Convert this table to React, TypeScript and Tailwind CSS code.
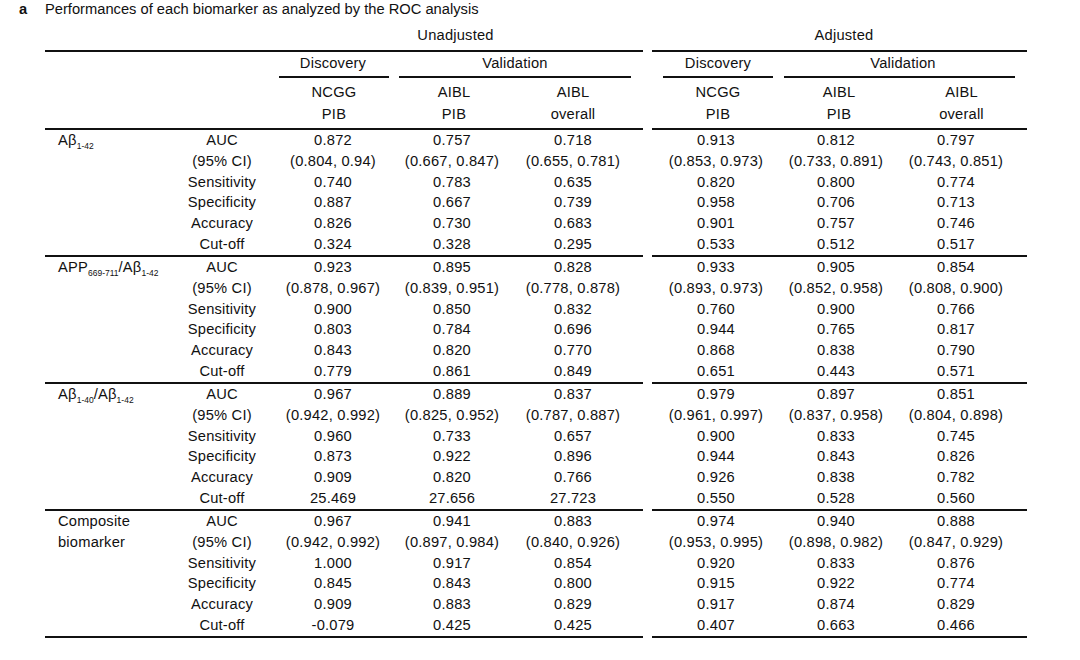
import React from "react";

type Row = [string, string, string, string, string, string, string];

const Sub = ({ children }: { children: React.ReactNode }) => (
  <span className="text-[8.5px] leading-none align-[-4px] tracking-normal">{children}</span>
);

const groups: { label: React.ReactNode[]; rows: Row[] }[] = [
  {
    label: [
      <>
        Aβ<Sub>1-42</Sub>
      </>,
    ],
    rows: [
      ["AUC", "0.872", "0.757", "0.718", "0.913", "0.812", "0.797"],
      ["(95% CI)", "(0.804, 0.94)", "(0.667, 0.847)", "(0.655, 0.781)", "(0.853, 0.973)", "(0.733, 0.891)", "(0.743, 0.851)"],
      ["Sensitivity", "0.740", "0.783", "0.635", "0.820", "0.800", "0.774"],
      ["Specificity", "0.887", "0.667", "0.739", "0.958", "0.706", "0.713"],
      ["Accuracy", "0.826", "0.730", "0.683", "0.901", "0.757", "0.746"],
      ["Cut-off", "0.324", "0.328", "0.295", "0.533", "0.512", "0.517"],
    ],
  },
  {
    label: [
      <>
        APP<Sub>669-711</Sub>/Aβ<Sub>1-42</Sub>
      </>,
    ],
    rows: [
      ["AUC", "0.923", "0.895", "0.828", "0.933", "0.905", "0.854"],
      ["(95% CI)", "(0.878, 0.967)", "(0.839, 0.951)", "(0.778, 0.878)", "(0.893, 0.973)", "(0.852, 0.958)", "(0.808, 0.900)"],
      ["Sensitivity", "0.900", "0.850", "0.832", "0.760", "0.900", "0.766"],
      ["Specificity", "0.803", "0.784", "0.696", "0.944", "0.765", "0.817"],
      ["Accuracy", "0.843", "0.820", "0.770", "0.868", "0.838", "0.790"],
      ["Cut-off", "0.779", "0.861", "0.849", "0.651", "0.443", "0.571"],
    ],
  },
  {
    label: [
      <>
        Aβ<Sub>1-40</Sub>/Aβ<Sub>1-42</Sub>
      </>,
    ],
    rows: [
      ["AUC", "0.967", "0.889", "0.837", "0.979", "0.897", "0.851"],
      ["(95% CI)", "(0.942, 0.992)", "(0.825, 0.952)", "(0.787, 0.887)", "(0.961, 0.997)", "(0.837, 0.958)", "(0.804, 0.898)"],
      ["Sensitivity", "0.960", "0.733", "0.657", "0.900", "0.833", "0.745"],
      ["Specificity", "0.873", "0.922", "0.896", "0.944", "0.843", "0.826"],
      ["Accuracy", "0.909", "0.820", "0.766", "0.926", "0.838", "0.782"],
      ["Cut-off", "25.469", "27.656", "27.723", "0.550", "0.528", "0.560"],
    ],
  },
  {
    label: [<>Composite</>, <>biomarker</>],
    rows: [
      ["AUC", "0.967", "0.941", "0.883", "0.974", "0.940", "0.888"],
      ["(95% CI)", "(0.942, 0.992)", "(0.897, 0.984)", "(0.840, 0.926)", "(0.953, 0.995)", "(0.898, 0.982)", "(0.847, 0.929)"],
      ["Sensitivity", "1.000", "0.917", "0.854", "0.920", "0.833", "0.876"],
      ["Specificity", "0.845", "0.843", "0.800", "0.915", "0.922", "0.774"],
      ["Accuracy", "0.909", "0.883", "0.829", "0.917", "0.874", "0.829"],
      ["Cut-off", "-0.079", "0.425", "0.425", "0.407", "0.663", "0.466"],
    ],
  },
];

const GRID = "grid grid-cols-[125px_104px_118px_120px_131px_9px_126px_118px_131px]";

const Rule = () => (
  <div className="flex gap-[9px]">
    <div className="w-[598px] h-[2px] bg-[#111]" />
    <div className="w-[375px] h-[2px] bg-[#111]" />
  </div>
);

const dataPad = ["", "", "pr-[9px]", "", "pl-[2px]", "pr-[2px]", "pr-[11px]"];

export default function App() {
  return (
    <div className="w-[1080px] h-[660px] bg-white text-[#111] font-['Liberation_Sans',Arial,sans-serif] text-[14.7px] overflow-hidden">
      {/* Title */}
      <div className="flex h-[18px] leading-[18px] pl-[19px]">
        <span className="w-[26px] font-bold">a</span>
        <span>Performances of each biomarker as analyzed by the ROC analysis</span>
      </div>

      <div className="ml-[45px] mt-[7px] tracking-[0.2px]">
        {/* Unadjusted / Adjusted */}
        <div className={`${GRID} h-[25px] leading-[21px]`}>
          <div className="col-span-2" />
          <div className="col-span-3 text-center pr-[6px]">Unadjusted</div>
          <div />
          <div className="col-span-3 text-center pl-[9px]">Adjusted</div>
        </div>
        <Rule />

        {/* Discovery / Validation */}
        <div className={`${GRID} leading-[21px]`}>
          <div className="col-span-2" />
          <div>
            <div className="h-[24px] pt-[1px] text-center">Discovery</div>
            <div className="h-[2px] bg-[#111] ml-[5px] mr-[3px]" />
          </div>
          <div className="col-span-2">
            <div className="h-[24px] pt-[1px] text-center pr-[5px]">Validation</div>
            <div className="h-[2px] bg-[#111] ml-[7px] mr-[12px]" />
          </div>
          <div />
          <div>
            <div className="h-[24px] pt-[1px] text-center pl-[6px]">Discovery</div>
            <div className="h-[2px] bg-[#111] ml-[11px] mr-[5px]" />
          </div>
          <div className="col-span-2">
            <div className="h-[24px] pt-[1px] text-center pl-[1px]">Validation</div>
            <div className="h-[2px] bg-[#111] ml-[6px] mr-[12px]" />
          </div>
        </div>

        {/* Cohorts */}
        <div className={`${GRID} h-[50px] pt-[4px] leading-[21.5px] text-center`}>
          <div className="col-span-2" />
          <div className="flex flex-col pl-[2px]">
            <span>NCGG</span>
            <span>PIB</span>
          </div>
          <div className="flex flex-col pl-[4px]">
            <span>AIBL</span>
            <span>PIB</span>
          </div>
          <div className="flex flex-col pr-[9px]">
            <span>AIBL</span>
            <span>overall</span>
          </div>
          <div />
          <div className="flex flex-col pl-[6px]">
            <span>NCGG</span>
            <span>PIB</span>
          </div>
          <div className="flex flex-col pl-[4px]">
            <span>AIBL</span>
            <span>PIB</span>
          </div>
          <div className="flex flex-col">
            <span>AIBL</span>
            <span>overall</span>
          </div>
        </div>
        <Rule />

        {groups.map((g, gi) => (
          <div key={gi}>
            {g.rows.map((r, ri) => (
              <div key={ri} className={`${GRID} h-[20.833px] leading-[20.833px] whitespace-nowrap`}>
                <div className="pl-[13px] text-left">{g.label[ri] ?? null}</div>
                <div className="text-center">{r[0]}</div>
                <div className={`text-center ${dataPad[0]}`}>{r[1]}</div>
                <div className={`text-center ${dataPad[1]}`}>{r[2]}</div>
                <div className={`text-center ${dataPad[2]}`}>{r[3]}</div>
                <div />
                <div className={`text-center ${dataPad[4]}`}>{r[4]}</div>
                <div className={`text-center ${dataPad[5]}`}>{r[5]}</div>
                <div className={`text-center ${dataPad[6]}`}>{r[6]}</div>
              </div>
            ))}
            <Rule />
          </div>
        ))}
      </div>
    </div>
  );
}
